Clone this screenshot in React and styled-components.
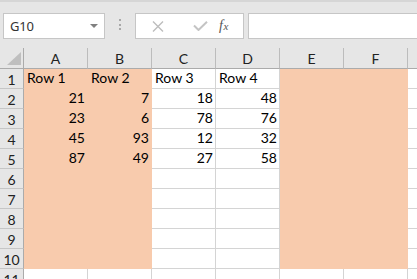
import React from "react";
import styled, { createGlobalStyle } from "styled-components";

const GlobalStyle = createGlobalStyle`
  html, body {
    margin: 0;
    padding: 0;
    background: #ffffff;
    overflow: hidden;
  }
`;

// column G is only a sliver at the right edge, its letter sits off-screen
const COLS = ["A", "B", "C", "D", "E", "F", "G"];
const FILLED = ["A", "B", "E", "F"];
const DATA = [
  ["Row 1", "Row 2", "Row 3", "Row 4"],
  [21, 7, 18, 48],
  [23, 6, 78, 76],
  [45, 93, 12, 32],
  [87, 49, 27, 58],
];
const ROWS = 11;
const FILL_ROWS = 10;

const App = () => {
  return (
    <>
      <GlobalStyle />
      <Toolbar>
        <NameBox>
          <NameText>G10</NameText>
          <Caret />
        </NameBox>
        <Grip>
          <Dot />
          <Dot />
          <Dot />
        </Grip>
        <FormulaButtons>
          <IconSlot>
            <svg width="12" height="11" viewBox="0 0 12 11">
              <path d="M1 0.5 L11 10.5 M11 0.5 L1 10.5" stroke="#bdbdbd" strokeWidth="1.4" fill="none" />
            </svg>
          </IconSlot>
          <IconSlot>
            <svg width="15" height="10" viewBox="0 0 15 10">
              <path d="M1 4.5 L5.5 9 L14 0.8" stroke="#c4c4c4" strokeWidth="2" fill="none" />
            </svg>
          </IconSlot>
          <FxLabel>
            f<sub>x</sub>
          </FxLabel>
        </FormulaButtons>
        <FormulaInput />
      </Toolbar>

      <Sheet>
        <Corner>
          <Triangle />
        </Corner>
        {COLS.map((c) => (
          <ColHead key={c}>{c === "G" ? "" : c}</ColHead>
        ))}
        {Array.from({ length: ROWS }, (_, r) => (
          <React.Fragment key={r}>
            <RowHead>{r + 1}</RowHead>
            {COLS.map((c, ci) => {
              const value = DATA[r] ? DATA[r][ci] : undefined;
              const filled = FILLED.includes(c) && r < FILL_ROWS;
              return (
                <Cell key={c} $filled={filled} $num={typeof value === "number"}>
                  {value}
                </Cell>
              );
            })}
          </React.Fragment>
        ))}
      </Sheet>
    </>
  );
};

export default App;

const Toolbar = styled.div`
  display: flex;
  align-items: flex-start;
  height: 48px;
  box-sizing: border-box;
  padding: 11px 0 0 3px;
  background: #e6e6e6;
  border-top: 2px solid #d6d6d6;
`;

const NameBox = styled.div`
  display: flex;
  align-items: center;
  justify-content: space-between;
  width: 102px;
  height: 26px;
  box-sizing: border-box;
  padding: 0 6px 0 6px;
  background: #ffffff;
  border: 1px solid #c6c6c6;
`;

const NameText = styled.span`
  font-family: "Noto Sans", "Open Sans", sans-serif;
  font-size: 13px;
  color: #333333;
  letter-spacing: -0.2px;
`;

const Caret = styled.span`
  width: 0;
  height: 0;
  border-left: 4px solid transparent;
  border-right: 4px solid transparent;
  border-top: 4px solid #808080;
`;

const Grip = styled.div`
  display: flex;
  flex-direction: column;
  gap: 2.5px;
  margin: 6px 14px 0 14px;
`;

const Dot = styled.span`
  width: 2px;
  height: 2px;
  background: #a8a8a8;
`;

const FormulaButtons = styled.div`
  display: flex;
  align-items: center;
  width: 109px;
  height: 26px;
  box-sizing: border-box;
  padding-left: 12px;
  background: #ffffff;
  border: 1px solid #c6c6c6;
`;

const IconSlot = styled.span`
  display: flex;
  align-items: center;
  justify-content: center;
  width: 36px;
  &:first-child {
    width: 20px;
    margin-right: 14px;
  }
`;

const FxLabel = styled.span`
  margin-left: 1px;
  font-family: "Liberation Serif", serif;
  font-style: italic;
  font-size: 14px;
  color: #555555;
  sub {
    font-size: 11px;
    vertical-align: 0;
    margin-left: 0.5px;
  }
`;

const FormulaInput = styled.div`
  flex: 1;
  height: 26px;
  margin-left: 4px;
  margin-right: -4px;
  box-sizing: border-box;
  background: #ffffff;
  border: 1px solid #c6c6c6;
`;

const Sheet = styled.div`
  display: grid;
  grid-template-columns: 24px repeat(7, 64px);
  grid-template-rows: 21px repeat(${ROWS}, 20px);
  font-family: Lato, "Liberation Sans", sans-serif;
  font-size: 14px;
  color: #000000;
`;

const HeadBase = styled.div`
  box-sizing: border-box;
  background: #e6e6e6;
  display: flex;
  align-items: center;
  justify-content: center;
  color: #222222;
`;

const Corner = styled(HeadBase)`
  position: relative;
  border-right: 1px solid #ababab;
  border-bottom: 1px solid #ababab;
`;

const Triangle = styled.span`
  position: absolute;
  right: 2px;
  bottom: 3px;
  width: 0;
  height: 0;
  border-left: 14px solid transparent;
  border-bottom: 13px solid #bfbfbf;
`;

const ColHead = styled(HeadBase)`
  padding-top: 1px;
  border-right: 1px solid #bcbcbc;
  border-bottom: 1px solid #ababab;
`;

const RowHead = styled(HeadBase)`
  border-right: 1px solid #ababab;
  border-bottom: 1px solid #c6c6c6;
  padding-top: 1px;
`;

const Cell = styled.div`
  box-sizing: border-box;
  display: flex;
  align-items: flex-end;
  justify-content: ${({ $num }) => ($num ? "flex-end" : "flex-start")};
  padding: 0 2px 1px 3px;
  line-height: 18px;
  white-space: nowrap;
  background: ${({ $filled }) => ($filled ? "#f8cbad" : "#ffffff")};
  border-right: 1px solid ${({ $filled }) => ($filled ? "#f8cbad" : "#d4d4d4")};
  border-bottom: 1px solid ${({ $filled }) => ($filled ? "#f8cbad" : "#d4d4d4")};
`;
